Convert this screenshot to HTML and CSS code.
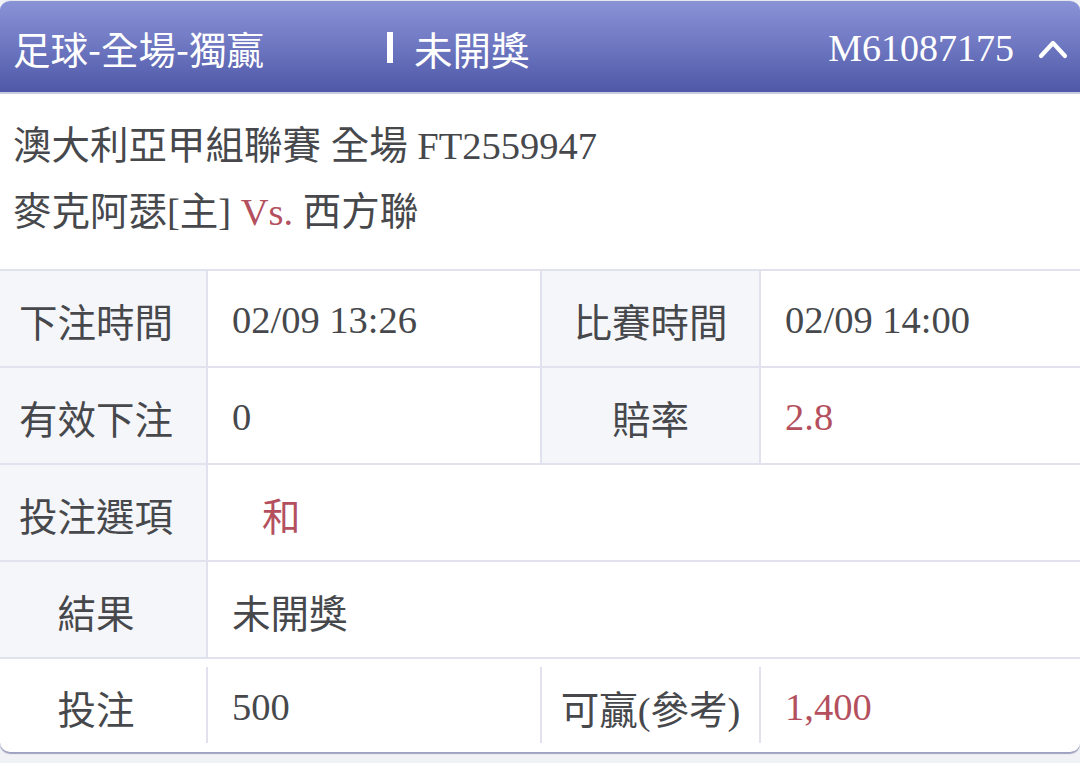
FILE: index.html
```html
<!DOCTYPE html>
<html lang="zh-Hant">
<head>
<meta charset="utf-8">
<link rel="stylesheet" href="styles.css">
</head>
<body>
<div class="card">
  <div class="head">
    <div class="title">足球-全場-獨贏</div>
    <div class="status"><span class="bar"></span>未開獎</div>
    <div class="id">M61087175</div>
    <svg class="chev" width="30" height="22" viewBox="0 0 30 22"><path d="M3 19 L15 6 L27 19" fill="none" stroke="#fff" stroke-width="4.2" stroke-linecap="round" stroke-linejoin="round"/></svg>
  </div>
  <div class="info">
    <div class="line">澳大利亞甲組聯賽 全場 FT2559947</div>
    <div class="line">麥克阿瑟[主] <span class="red">Vs.</span> 西方聯</div>
  </div>
  <div class="table">
    <div class="row">
      <div class="lab">下注時間</div>
      <div class="val">02/09 13:26</div>
      <div class="lab">比賽時間</div>
      <div class="val last">02/09 14:00</div>
    </div>
    <div class="row">
      <div class="lab">有效下注</div>
      <div class="val">0</div>
      <div class="lab">賠率</div>
      <div class="val last red">2.8</div>
    </div>
    <div class="row wide">
      <div class="lab">投注選項</div>
      <div class="val last red indent">和</div>
    </div>
    <div class="row wide">
      <div class="lab">結果</div>
      <div class="val last">未開獎</div>
    </div>
    <div class="row foot">
      <div class="lab">投注</div>
      <div class="val">500</div>
      <div class="lab">可贏(參考)</div>
      <div class="val last red">1,400</div>
    </div>
  </div>
</div>
</body>
</html>
```

FILE: styles.css
```css
html, body {
  margin: 0;
  padding: 0;
}
body {
  background: #f1f2f5;
  width: 1080px;
  height: 763px;
  overflow: hidden;
  font-family: "Liberation Serif", "Noto Sans CJK TC", serif;
  color: #46484c;
}
.card {
  background: #fff;
  border-radius: 10px;
  overflow: hidden;
  box-shadow: 0 2px 1px #9ea2c0;
  height: 752px;
  border-top: 1px solid #e6e7ee;
  box-sizing: border-box;
}
.head {
  height: 93px;
  display: flex;
  align-items: center;
  padding: 2px 12px 0 13px;
  box-sizing: border-box;
  background: linear-gradient(to bottom, #8a93d6 0%, #6d76c0 50%, #4f58a6 100%);
  color: #fff;
  font-size: 38.5px;
  border-bottom: 2px solid #c9cbe0;
}
.title {
  width: 374px;
  font-size: 37.5px;
  font-family: "Noto Sans CJK TC", sans-serif;
}
.status {
  display: flex;
  align-items: center;
  font-family: "Noto Sans CJK TC", sans-serif;
}
.bar {
  width: 6px;
  height: 31px;
  background: #fff;
  margin-right: 21px;
}
.id {
  margin-left: auto;
  margin-right: 24px;
  font-size: 38px;
}
.chev {
  display: block;
}
.info {
  padding: 19px 0 24px 13px;
  font-size: 38.5px;
}
.line {
  line-height: 66px;
  height: 66px;
  white-space: nowrap;
}
.red {
  color: #b4505e;
}
.table {
  font-size: 38.5px;
}
.row {
  display: grid;
  grid-template-columns: 208px 334px 219px 1fr;
  border-top: 2px solid #e2e2ee;
  height: 95px;
}
.row.wide {
  grid-template-columns: 208px 1fr;
}
.lab {
  background: #f5f6fa;
  border-right: 2px solid #e2e2ee;
  display: flex;
  align-items: center;
  justify-content: center;
  padding: 3px 14px 0 0;
  white-space: nowrap;
}
.row .lab:nth-child(3) {
  padding-right: 0;
}
.val {
  display: flex;
  align-items: center;
  padding: 3px 0 0 24px;
  border-right: 2px solid #e2e2ee;
  white-space: nowrap;
}
.val.last {
  border-right: none;
}
.val.indent {
  padding-left: 54px;
}
.row.foot {
  height: 92px;
}
.row.foot .lab,
.row.foot .val {
  background: #fff;
  margin: 8px 0 8px;
}
.row.foot .val.last {
  margin: 0;
}
```
